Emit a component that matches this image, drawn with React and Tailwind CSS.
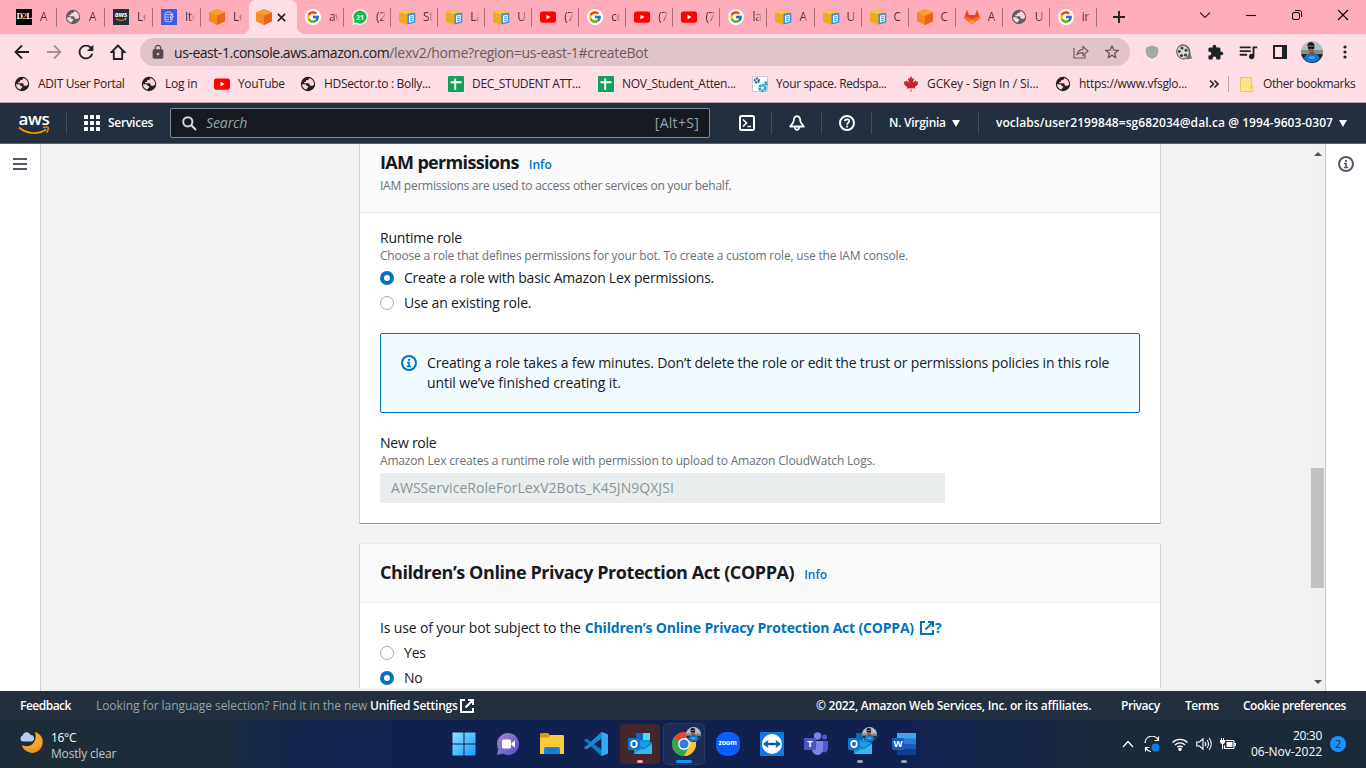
import React from 'react';
import { FcGoogle } from 'react-icons/fc';
import { FaCanadianMapleLeaf } from 'react-icons/fa';
import { MdExtension, MdQueueMusic, MdRefresh, MdLock, MdStarBorder } from 'react-icons/md';

/* ---------- favicons ---------- */

const Globe = ({ className }) => (
  <svg viewBox="0 0 16 16" className={`size-4 ${className}`}>
    <circle cx="8" cy="8" r="7.2" fill="currentColor" />
    <path
      d="M2 8.300h3.200c1 0 1.300.8 1.300 1.700h1.700v1.600c-.7.100-1.200.3-1.400 1.900C3.900 13.200 2 11 2 8.300zM9.300 2c-.2 1.600-1 2-2.500 2-.5 0-.8.300-.8.900s-.4 1-1.100 1h-.7v1.400h3.900c1.100 0 1.500.6 1.500 1.500 0 .8.400 1 1.100 1h1.600c.5 0 .8-.4.8-.9h1c.3-3.200-1.600-6.100-4.800-6.900z"
      className="fill-[#ffd3db]"
    />
  </svg>
);

const D2L = () => (
  <span className="flex size-4 items-center justify-center bg-black font-['Liberation_Serif',serif] text-[9px] font-bold tracking-[-0.600px] text-white">
    D<span className="text-[#f0a060]">2</span>L
  </span>
);

const AwsTile = () => (
  <svg viewBox="0 0 16 16" className="size-4">
    <rect width="16" height="16" fill="#232f3e" />
    <text x="8" y="8" fill="#fff" fontSize="6.500" fontWeight="700" textAnchor="middle" fontFamily="Open Sans">aws</text>
    <path d="M3 9.800c3 2 7 2 9.800.2M11.500 9.200l1.600.4-.4 1.500" fill="none" stroke="#f90" />
  </svg>
);

const Dynamo = () => (
  <svg viewBox="0 0 16 16" className="size-4">
    <rect width="16" height="16" fill="#3d5be0" />
    <g fill="none" stroke="#c6d2ff" strokeWidth=".9">
      <ellipse cx="7.500" cy="4.300" rx="3.500" ry="1.300" />
      <path d="M4 4.300v7.400c0 1.700 7 1.700 7 0V9.500M11 4.300v2M4 7c0 1.200 3 1.500 4.500 1.200M4 9.600c0 1 2.500 1.300 4 1.100M10.500 5.500 9 8.500h1.500L9.500 11l3-3.500H11l1-2z" />
    </g>
  </svg>
);

const OrangeBox = () => (
  <svg viewBox="0 0 16 16" className="size-4">
    <path d="M8 0 16 3.400v8.800L8 16 0 12.200V3.400z" fill="#f58a1f" />
    <path d="M8 0 16 3.400 8 6.800 0 3.400z" fill="#fa9e2e" />
    <path d="M8 6.800 16 3.400v8.800L8 16z" fill="#e8641b" />
  </svg>
);

const YellowBox = () => (
  <svg viewBox="0 0 17 16" className="h-4 w-[17px]">
    <path d="M7 .5 14 3v10l-7 2.500L0 13V3z" fill="#edab22" />
    <path d="M7 .5 14 3 7 5.200 0 3z" fill="#f8c64d" />
    <path d="m8.500 4.800 7.800-1v9.600l-7.800 2.100z" fill="#3c8fc9" />
    <path d="m10 6.400 4.800-.7v6.700L10 13.700z" fill="#e9f4fc" />
    <path d="m11 8 2.800-.4M11 9.900l2.800-.5M11 11.800l2.800-.6" stroke="#3c8fc9" strokeWidth=".9" />
  </svg>
);

const GoogleIcon = () => (
  <span className="flex size-4 items-center justify-center rounded-full bg-white">
    <FcGoogle className="size-[14px]" />
  </span>
);

const YouTubeIcon = () => (
  <svg viewBox="0 0 16 16" className="size-4">
    <rect y="2.400" width="16" height="11.400" rx="2.400" fill="#f00" />
    <path d="m6.500 5.800 4 2.300-4 2.300z" fill="#fff" />
  </svg>
);

const WhatsApp = () => (
  <svg viewBox="0 0 16 16" className="size-4">
    <path d="M8 .2a7.800 7.800 0 1 1-3.600 14.700L.3 15.800l1-4A7.800 7.800 0 0 1 8 .2z" fill="#fff" />
    <path d="M8 1.400a6.600 6.600 0 1 1-3.500 12.200l-2.700.7.8-2.700A6.600 6.600 0 0 1 8 1.400z" fill="#12b84c" />
    <text x="8" y="10.500" fill="#fff" fontSize="7" fontWeight="700" textAnchor="middle" fontFamily="Open Sans">21</text>
  </svg>
);

const Gitlab = () => (
  <svg viewBox="0 0 16 16" className="size-4">
    <path d="M3 .8 5 6h6l2-5.200L15.700 8c.2.8 0 1.500-.7 2L8 15.200 1 10c-.7-.5-.9-1.200-.7-2z" fill="#e24329" />
    <path d="M.8 7.300C3.500 7.500 6 9 8 10.700 10 9 12.500 7.500 15.200 7.300l.5 1.200c0 .7-.2 1.100-.7 1.500L8 15.200 1 10c-.6-.4-.8-1-.6-1.600z" fill="#fc6d26" />
    <path d="m8 10.700 3.300 2L8 15.200l-3.300-2.500z" fill="#fca326" />
  </svg>
);

const Sheets = () => (
  <svg viewBox="0 0 16 16" className="size-4">
    <rect width="16" height="16" rx="1" fill="#12a05c" />
    <path d="M2.500 6.200h11M7.200 2.500v11.500" stroke="#fff" strokeWidth="1.900" />
  </svg>
);

const Gears = () => (
  <svg viewBox="0 0 16 16" className="size-4">
    <rect x=".5" y=".5" width="15" height="15" fill="#fff" stroke="#c4cdd2" />
    <circle cx="4.800" cy="4.500" r="2" fill="none" stroke="#1d6f93" strokeWidth="2.200" strokeDasharray="2 .5" />
    <circle cx="10.500" cy="12" r="2.800" fill="none" stroke="#2fa3dc" strokeWidth="3" strokeDasharray="2.500 .6" />
    <path d="M12 5.500h3.500V10L13 9z" fill="#2fa3dc" />
  </svg>
);

/* ---------- browser chrome ---------- */

const tabs = [
  [D2L, 'A'], [() => <Globe className="text-[#5f5f63]" />, 'A'], [AwsTile, 'Le'], [Dynamo, 'Ite'], [OrangeBox, 'Le'],
];
const moreTabs = [
  [GoogleIcon, 'aw'], [WhatsApp, '(2'], [YellowBox, 'St'], [YellowBox, 'La'], [YellowBox, 'U'],
  [YouTubeIcon, '(7'], [GoogleIcon, 'co'], [YouTubeIcon, '(7'], [YouTubeIcon, '(7'], [GoogleIcon, 'la'],
  [YellowBox, 'A'], [YellowBox, 'U'], [YellowBox, 'C'], [OrangeBox, 'C'], [Gitlab, 'A'],
  [() => <Globe className="text-[#5f5f63]" />, 'U'], [GoogleIcon, 'ir'],
];

function Tab({ icon: Icon, label, width, line = true }) {
  return (
    <div className={`flex h-[19px] shrink-0 items-center pl-2 ${width} ${line ? 'border-r border-[#a8727c]' : ''}`}>
      <span className="flex w-6 shrink-0"><Icon /></span>
      <span className="w-[9px] overflow-hidden whitespace-nowrap bg-linear-to-r from-[#4a2f35] from-50% to-[#4a2f35]/20 bg-clip-text text-[12px] tracking-[-0.300px] text-transparent">{label}</span>
    </div>
  );
}

const Photo = ({ className }) => (
  <svg viewBox="0 0 22 22" className={className}>
    <defs><clipPath id="face"><circle cx="11" cy="11" r="11" /></clipPath></defs>
    <g clipPath="url(#face)">
      <rect width="22" height="22" fill="#a8c3d3" />
      <path d="M0 9h22v5H0z" fill="#9a8b78" />
      <path d="M0 13h22v9H0z" fill="#1b2c40" />
      <path d="M3 18c1-4 4-6 7-6.500 4-.5 8 2 8.500 6.500L14 21H7z" fill="#1576d6" />
      <path d="M8 10h5l-1 3.500H9.500z" fill="#7a4f3e" />
      <ellipse cx="10" cy="7" rx="3" ry="4" fill="#94644d" />
      <path d="M6.500 6C6 2.500 7.800 1.300 10 1.300s4 1.700 3.500 4.700l-1-1.500h-5z" fill="#1a1717" />
      <path d="M7 5.800h6.300v2h-2.600L10 7.200l-.8.600H7z" fill="#0c0c0e" />
      <path d="M8 15.500h5.500v2H8z" fill="#62b0f2" />
    </g>
  </svg>
);

function TabStrip() {
  return (
    <div className="flex h-[34px] bg-[#ffacbb] pl-2">
      <div className="flex items-center">
        {tabs.map(([icon, label], i) => (
          <Tab key={i} icon={icon} label={label} width={i === 0 ? 'w-[49px]' : 'w-12'} line={i < 4} />
        ))}
      </div>
      <div className="relative flex w-12 shrink-0 items-center rounded-t-[7px] bg-[#ffdfe5] pl-[7px]">
        <span className="absolute bottom-0 -left-2 size-2 bg-[radial-gradient(circle_at_0_0,#ffacbb_8px,#ffdfe5_8.500px)]" />
        <span className="absolute -right-2 bottom-0 size-2 bg-[radial-gradient(circle_at_100%_0,#ffacbb_8px,#ffdfe5_8.500px)]" />
        <OrangeBox />
        <svg viewBox="0 0 10 10" className="mr-[11px] ml-auto size-[9px] shrink-0" stroke="#202124" strokeWidth="1.800"><path d="m1 1 8 8M9 1 1 9" /></svg>
      </div>
      <div className="flex shrink-0 items-center">
        {moreTabs.map(([icon, label], i) => (
          <Tab key={i} icon={icon} label={label} width="w-[47.060px]" />
        ))}
      </div>
      <svg viewBox="0 0 12 12" className="mt-[11px] ml-4 size-3 shrink-0" stroke="#202124" strokeWidth="1.900"><path d="M6 0v12M0 6h12" /></svg>
      <div className="mt-2 ml-auto flex h-[13px] items-center pr-[17px] text-[#3a2529]">
        <svg viewBox="0 0 12 12" className="mr-[34px] size-3" fill="none" stroke="currentColor" strokeWidth="1.100"><path d="m1 3.500 5 5 5-5" /></svg>
        <svg viewBox="0 0 12 12" className="mr-[34px] size-3" fill="none" stroke="#000" strokeWidth="1.100"><path d="M1 6.500h10" /></svg>
        <svg viewBox="0 0 12 12" className="mr-[34px] size-3" fill="none" stroke="#000" strokeWidth="1"><rect x="1.500" y="3.500" width="7" height="7" rx="1.500" /><path d="M4 1.500h4.500a2 2 0 0 1 2 2V8" /></svg>
        <svg viewBox="0 0 12 12" className="size-3" fill="none" stroke="#000" strokeWidth="1.100"><path d="m1 1 10 10M11 1 1 11" /></svg>
      </div>
    </div>
  );
}

function Toolbar() {
  return (
    <div className="flex h-9 items-center bg-[#ffdfe5] pl-[14px] text-[#202124]">
      <svg viewBox="0 0 16 16" className="mr-4 size-4" fill="none" stroke="#202124" strokeWidth="1.800"><path d="M15 8H2M8 1.500 1.500 8 8 14.500" /></svg>
      <svg viewBox="0 0 16 16" className="mr-[13px] size-4" fill="none" stroke="#a58f94" strokeWidth="1.800"><path d="M1 8h13M8 1.500 14.500 8 8 14.500" /></svg>
      <MdRefresh className="mr-[13px] size-[22px]" />
      <svg viewBox="0 0 16 16" className="mr-[14px] size-4" fill="none" stroke="#202124" strokeWidth="1.900"><path d="M8 1.500 1.500 8h2.300v7h8.400V8h2.300z" /></svg>
      <div className="flex h-7 w-[990px] items-center rounded-full bg-[#e0c4c9] pl-[10px]">
        <MdLock className="mr-2 size-4 text-[#54494c]" />
        <span className="whitespace-nowrap text-[14px] tracking-[-0.460px] text-[#202124]">us-east-1.console.aws.amazon.com</span>
        <span className="whitespace-nowrap text-[14px] tracking-[-0.280px] text-[#6b5a5e]">/lexv2/home?region=us-east-1#createBot</span>
        <svg viewBox="0 0 16 16" className="mr-[14px] ml-auto size-4" fill="none" stroke="#6a5b5f" strokeWidth="1.200"><path d="M1 4v10h11v-3M4 10.500c.6-3 2.600-5 6-5.200V2.500l5 4.500-5 4.400V8.700c-2.600 0-4.500.500-6 1.800z" /></svg>
        <MdStarBorder className="mr-[9px] size-[18px] text-[#5f5155]" />
      </div>
      <svg viewBox="0 0 14 14" className="ml-[15px] size-[14px]"><path d="M7 .5 13.200 2.500V7c0 3.500-2.500 5.500-6.200 6.700C3.300 12.500.8 10.500.8 7V2.500z" fill="#a5a5a7" /></svg>
      <svg viewBox="0 0 16 16" className="ml-[17px] size-4">
        <path d="M5 .5c7-.5 9.500 3 9.500 9l1.500 5-5 1z" fill="#777" />
        <ellipse cx="7" cy="8" rx="6.200" ry="7" fill="#dadada" stroke="#555" transform="rotate(-15 7 8)" />
        <g fill="#3f3f3f"><circle cx="6" cy="4" r="1.600" /><circle cx="3.300" cy="7.500" r="1.400" /><circle cx="5.500" cy="11.500" r="1.600" /><circle cx="9.500" cy="11" r="1.600" /><circle cx="10" cy="6.300" r="1.500" /></g>
      </svg>
      <MdExtension className="ml-[15px] size-[17px]" />
      <MdQueueMusic className="ml-[13px] size-[22px]" />
      <svg viewBox="0 0 14 14" className="ml-[14px] size-[14px]"><path d="M1 1h12v12H1z" fill="none" stroke="#202124" strokeWidth="2" /><path d="M9 1h4v12H9z" fill="#202124" /></svg>
      <Photo className="ml-[14px] size-[22px]" />
      <svg viewBox="0 0 4 14" className="ml-5 h-[14px] w-1" fill="#202124"><circle cx="2" cy="2" r="1.600" /><circle cx="2" cy="7" r="1.600" /><circle cx="2" cy="12" r="1.600" /></svg>
    </div>
  );
}

const DarkGlobe = () => <Globe className="text-[#202124]" />;
const Maple = () => <FaCanadianMapleLeaf className="size-4 text-[#c4262e]" />;
const bookmarks = [
  [DarkGlobe, 'ADIT User Portal', 'w-[127px] tracking-[-0.340px]'],
  [DarkGlobe, 'Log in', 'w-[73px] tracking-[-0.200px]'],
  [YouTubeIcon, 'YouTube', 'w-[86px] tracking-[-0.400px]'],
  [DarkGlobe, 'HDSector.to : Bolly...', 'w-[148px] tracking-[-0.320px]'],
  [Sheets, 'DEC_STUDENT ATT...', 'w-[150px] tracking-[-0.330px]'],
  [Sheets, 'NOV_Student_Atten...', 'w-[154px] tracking-[-0.300px]'],
  [Gears, 'Your space. Redspa...', 'w-[151px] tracking-[-0.380px]'],
  [Maple, 'GCKey - Sign In / Si...', 'w-[152px] tracking-[-0.080px]'],
  [DarkGlobe, 'https://www.vfsglo...', 'w-[154px] tracking-[-0.290px]'],
];

function BookmarksBar() {
  return (
    <div className="flex h-[33px] items-center border-b border-[#b9a5ab] bg-[#ffdfe5] pb-[4px] pl-[14px] text-[12px] text-[#2b2326]">
      {bookmarks.map(([Icon, label, cls]) => (
        <div key={label} className={`flex shrink-0 items-center whitespace-nowrap ${cls}`}>
          <span className="w-6 shrink-0"><Icon /></span>
          {label}
        </div>
      ))}
      <svg viewBox="0 0 10 10" className="size-[10px] shrink-0" fill="none" stroke="#202124" strokeWidth="1.600"><path d="m1 1.500 3.500 3.500L1 8.500M5.500 1.500 9 5 5.500 8.500" /></svg>
      <span className="ml-[9px] h-4 w-px bg-[#bfa3a9]" />
      <svg viewBox="0 0 14 15" className="mr-[9px] ml-[11px] h-[15px] w-[14px]"><path d="M.5.500h11v8.500h1.500v5.500H.5z" fill="#ffe48f" stroke="#ecc94f" /><path d="M10.500 9v4" stroke="#ecc94f" /></svg>
      <span className="whitespace-nowrap tracking-[-0.420px]">Other bookmarks</span>
    </div>
  );
}

/* ---------- AWS console ---------- */

const Divider = () => <span className="h-[22px] w-px shrink-0 bg-[#414d5c]" />;
const Caret = () => <svg viewBox="0 0 8 7" className="h-[7px] w-2 shrink-0" fill="#fff"><path d="M0 0h8L4 7z" /></svg>;

function ConsoleHeader() {
  return (
    <header className="flex h-[41px] items-center border-b border-[#55606d] bg-[#232f3e] text-[12px] font-semibold whitespace-nowrap text-white">
      <div className="ml-[18px] flex h-[26px] w-8 flex-col items-center pt-[3px]">
        <span className="text-[17px] leading-[11px] font-semibold tracking-[-0.400px]">aws</span>
        <svg viewBox="0 0 32 9" className="mt-[2px] h-[9px] w-8 shrink-0" fill="none" stroke="#f90" strokeWidth="1.700"><path d="M1 1.500C9 8.500 21 8.500 28 3.500" /><path d="M25 1.500c2-.7 4-.6 5.200 0 .3 1.500-.4 3.500-1.700 5.200" strokeWidth="1.300" /></svg>
      </div>
      <span className="w-4" />
      <Divider />
      <svg viewBox="0 0 16 16" className="ml-[17px] size-4" fill="#fff">
        {[0, 6, 12].map((y) => [0, 6, 12].map((x) => <rect key={`${x}-${y}`} x={x} y={y} width="4" height="4" rx=".5" />))}
      </svg>
      <span className="ml-2 w-[62px] tracking-[-0.250px]">Services</span>
      <div className="flex h-[30px] w-[540px] items-center rounded-[2px] border border-[#7f8a94] bg-[#16191f] pr-[10px] pl-[11px] text-[14px] font-normal text-[#95a5a6]">
        <svg viewBox="0 0 15 15" className="size-[15px]" fill="none" stroke="#d5dbdb" strokeWidth="2"><circle cx="5.800" cy="5.800" r="4.600" /><path d="m9.300 9.300 4.700 4.700" /></svg>
        <span className="ml-[9px] pb-px tracking-[-0.100px] italic">Search</span>
        <span className="ml-auto pb-px tracking-[0.280px]">[Alt+S]</span>
      </div>
      <svg viewBox="0 0 16 16" className="ml-[29px] size-4" fill="none" stroke="#fff" strokeWidth="2"><rect x="1" y="1" width="14" height="14" rx="1.500" /><path d="m4 4.500 3.500 3.500L4 11.500M8.500 11.500H12" strokeWidth="1.600" /></svg>
      <span className="w-4" /><Divider />
      <svg viewBox="0 0 16 16" className="ml-[17px] size-4" fill="none" stroke="#fff" strokeWidth="1.800" strokeLinejoin="round"><path d="M8 1.200c-2.200.3-3.200 2-3.200 4.300C4.500 8 2.500 9.500 1.200 11.500h13.600C13.500 9.500 11.500 8 11.200 5.500 11.200 3.200 10.200 1.500 8 1.200zM5.800 12c.3 3.800 4.100 3.800 4.400 0" /></svg>
      <span className="w-4" /><Divider />
      <svg viewBox="0 0 16 16" className="ml-[17px] size-4" fill="none" stroke="#fff" strokeWidth="2"><circle cx="8" cy="8" r="7" /><path d="M5.800 6.300c.2-2.700 4.500-2.500 4.500 0C10.300 7.800 8 7.800 8 9.700M8 10.800v1.700" strokeWidth="1.700" /></svg>
      <span className="w-4" /><Divider />
      <span className="ml-[17px] w-[63px] tracking-[-0.270px]">N. Virginia</span>
      <Caret />
      <span className="w-[18px]" /><Divider />
      <span className="ml-[17px] w-[343px] tracking-[0.060px]">voclabs/user2199848=sg682034@dal.ca @ 1994-9603-0307</span>
      <Caret />
    </header>
  );
}

const InfoIcon = ({ className }) => (
  <svg viewBox="0 0 16 16" className={`size-4 shrink-0 ${className}`} fill="none" stroke="currentColor" strokeWidth="2">
    <circle cx="8" cy="8" r="7" />
    <path d="M6 7.500h2v4M5.800 11.500h4.400M7 4.900h2" strokeWidth="1.700" />
  </svg>
);

const External = ({ className = '' }) => (
  <svg viewBox="0 0 14 14" className={`size-[14px] ${className}`} fill="none" stroke="currentColor" strokeWidth="2">
    <path d="M5 1H1v12h12V9M8 1h5v5M13 1 5.500 8.500" />
  </svg>
);

function Radio({ checked, children, tracking }) {
  return (
    <label className="flex h-5 items-center gap-[10px]">
      <span className={`box-border size-[14px] shrink-0 rounded-full bg-white ${checked ? 'border-[4.500px] border-[#0073bb]' : 'border border-[#a3adad]'}`} />
      <span className={`leading-5 ${tracking}`}>{children}</span>
    </label>
  );
}

function Console() {
  return (
    <div className="flex h-[547px] text-[14px] whitespace-nowrap text-[#16191f]">
      <nav className="w-[41px] shrink-0 border-r border-[#cdd2d4] bg-white pt-[14px] pl-[13px]">
        <svg viewBox="0 0 14 12" className="h-3 w-[14px]" stroke="#545b64" strokeWidth="1.900"><path d="M0 1h14M0 6h14M0 11h14" /></svg>
      </nav>
      <main className="w-[1269px] shrink-0 overflow-hidden bg-[#f2f3f3] pl-[318px]">
        <section className="w-[802px] border-x border-b border-x-[#cdd3d6] border-b-[#8b95a1] bg-white">
          <div className="h-[69px] border-b border-[#eaeded] bg-[#fafafa] px-5 pt-[6px]">
            <div className="flex h-6 items-baseline gap-[10px]">
              <h2 className="text-[18px] leading-6 font-bold tracking-[-0.660px]">IAM permissions</h2>
              <a className="text-[12px] font-semibold text-[#0073bb]">Info</a>
            </div>
            <p className="mt-1 text-[12px] leading-4 tracking-[-0.250px] text-[#687078]">IAM permissions are used to access other services on your behalf.</p>
          </div>
          <div className="px-5 pt-[15px] pb-5">
            <div className="leading-5 tracking-[-0.200px]">Runtime role</div>
            <div className="text-[12px] leading-4 tracking-[-0.190px] text-[#687078]">Choose a role that defines permissions for your bot. To create a custom role, use the IAM console.</div>
            <div className="mt-1 flex flex-col gap-[5px]">
              <Radio checked tracking="tracking-[-0.240px]">Create a role with basic Amazon Lex permissions.</Radio>
              <Radio tracking="tracking-[-0.190px]">Use an existing role.</Radio>
            </div>
            <div className="mt-5 flex h-20 gap-[10px] rounded-[2px] border border-[#0073bb] bg-[#f1faff] pt-[19px] pl-5">
              <InfoIcon className="mt-[2px] text-[#0073bb]" />
              <div className="leading-5">
                <div className="tracking-[-0.165px]">Creating a role takes a few minutes. Don’t delete the role or edit the trust or permissions policies in this role</div>
                <div className="tracking-[-0.090px]">until we’ve finished creating it.</div>
              </div>
            </div>
            <div className="mt-5 leading-5 tracking-[-0.250px]">New role</div>
            <div className="text-[12px] leading-4 tracking-[-0.170px] text-[#687078]">Amazon Lex creates a runtime role with permission to upload to Amazon CloudWatch Logs.</div>
            <div className="mt-1 flex h-[30px] w-[565px] items-center rounded-[2px] bg-[#eaeded] px-[11px] pb-px tracking-[0.050px] text-[#879596]">AWSServiceRoleForLexV2Bots_K45JN9QXJSI</div>
          </div>
        </section>
        <section className="mt-[19px] w-[802px] border-x border-t border-x-[#cdd3d6] border-t-[#eaeded] bg-white">
          <div className="flex h-[59px] items-baseline gap-[10px] border-b border-[#eaeded] bg-[#fafafa] px-5 pt-4">
            <h2 className="text-[18px] leading-6 font-bold tracking-[-0.430px]">Children’s Online Privacy Protection Act (COPPA)</h2>
            <a className="text-[12px] font-semibold text-[#0073bb]">Info</a>
          </div>
          <div className="px-5 pt-[15px]">
            <div className="flex h-5 items-center leading-5">
              <span className="tracking-[-0.150px]">Is use of your bot subject to the</span>
              <a className="ml-1 flex items-center font-bold tracking-[-0.190px] text-[#0073bb]">
                Children’s Online Privacy Protection Act (COPPA)
                <External className="mr-[1px] ml-[6px]" />?
              </a>
            </div>
            <div className="mt-[5px] flex flex-col gap-[5px]">
              <Radio tracking="tracking-[-0.200px]">Yes</Radio>
              <Radio checked tracking="tracking-[-0.200px]">No</Radio>
            </div>
          </div>
        </section>
      </main>
      <div className="flex w-[16px] shrink-0 flex-col items-center border-r border-[#c3c7c8] bg-[#f1f1f1]">
        <svg viewBox="0 0 8 4" className="mt-2 h-1 w-2" fill="#505050"><path d="M4 0l4 4H0z" /></svg>
        <div className="mt-[312px] h-[120px] w-[13px] bg-[#c1c1c1]" />
        <svg viewBox="0 0 8 4" className="mt-auto mb-[7px] h-1 w-2" fill="#505050"><path d="M0 0h8L4 4z" /></svg>
      </div>
      <aside className="flex flex-1 justify-center bg-white pt-3"><InfoIcon className="text-[#545b64]" /></aside>
    </div>
  );
}

function Footer() {
  return (
    <footer className="flex h-[29px] items-center bg-[#232f3e] px-5 text-[12px] font-semibold whitespace-nowrap text-white">
      <span className="w-[76px] tracking-[-0.500px]">Feedback</span>
      <span className="w-[274px] font-normal tracking-[-0.060px] text-[#95a5a6]">Looking for language selection? Find it in the new</span>
      <span className="w-[90px] tracking-[-0.250px]">Unified Settings</span>
      <External />
      <span className="ml-auto w-[305px] tracking-[-0.270px]">© 2022, Amazon Web Services, Inc. or its affiliates.</span>
      <span className="w-[64px] tracking-[-0.430px]">Privacy</span>
      <span className="w-[58px] tracking-[-0.500px]">Terms</span>
      <span className="w-[103px] tracking-[-0.500px]">Cookie preferences</span>
    </footer>
  );
}

/* ---------- Windows taskbar ---------- */

const WindowsLogo = () => (
  <svg viewBox="0 0 24 24" className="size-6">
    <defs><linearGradient id="win" x1="0" y1="0" x2="1" y2="1"><stop stopColor="#8be2ff" /><stop offset="1" stopColor="#1b9bff" /></linearGradient></defs>
    <path d="M.5.500h11v11H.5zM12.500.5h11v11h-11zM.5 12.500h11v11H.5zM12.500 12.500h11v11h-11z" fill="url(#win)" />
  </svg>
);
const Chat = () => (
  <svg viewBox="0 0 24 24" className="size-6">
    <defs><linearGradient id="chat" x1="0" y1="0" x2="1" y2="1"><stop stopColor="#a985c9" /><stop offset="1" stopColor="#4c52d4" /></linearGradient></defs>
    <path d="M12 1a11 11 0 1 1-5 20.800L1 23l1.200-6A11 11 0 0 1 12 1z" fill="url(#chat)" />
    <rect x="6" y="7.500" width="9" height="9" rx="1.500" fill="#fff" /><path d="m15.500 11 3.500-2.500v7L15.500 13z" fill="#fff" />
  </svg>
);
const Explorer = () => (
  <svg viewBox="0 0 24 24" className="size-6">
    <path d="M0 2.500C0 1.500.5 1 1.500 1H8l2.500 2.500-2 2.500H0z" fill="#d9970f" />
    <path d="M0 5.500h8L10.500 3H22.500c1 0 1.500.5 1.500 1.500V22H0z" fill="#fdca3a" />
    <path d="M4 22v-5c0-1.500 1-2 2-2h12c1 0 2 .5 2 2v5z" fill="#1584d8" /><path d="M7.500 18h9" stroke="#0b5ea8" />
  </svg>
);
const VsCode = () => (
  <svg viewBox="0 0 24 24" className="size-6">
    <path d="M17.500 0 24 2.500v19L17.500 24 3 10.800 0 8.500l1.500-1.700 2 .4 14 10.300z" fill="#0b79c4" />
    <path d="m17.500 0-14 13L0 15.500l1.500 1.800 2-.5L17.500 6.500z" fill="#1a8ad4" />
    <path d="M17.500 0 24 2.500v19L17.500 24z" fill="#35aaf2" />
  </svg>
);
const Outlook = () => (
  <svg viewBox="0 0 24 24" className="size-6">
    <rect x="8" y="1" width="14" height="14" fill="#1490df" /><path d="M15 1h7v7h-7z" fill="#50d9ff" /><path d="M8 1h7v7H8z" fill="#0a67b5" />
    <path d="M6 10.500h18V22H6z" fill="#1a9ce6" /><path d="M24 11 6 22h18z" fill="#37b5f2" /><path d="m7 11 8.500 6L24 11" fill="none" stroke="#0b62aa" />
    <rect y="6" width="12" height="12" rx="1" fill="#0f74ce" />
    <ellipse cx="6" cy="12" rx="2.800" ry="3.200" fill="none" stroke="#fff" strokeWidth="1.700" />
  </svg>
);
const Chrome = () => (
  <svg viewBox="0 0 24 24" className="size-6">
    <circle cx="12" cy="12" r="12" fill="#ea4335" />
    <path d="M1.600 6A12 12 0 0 0 12 24l5.200-9z" fill="#2da94f" />
    <path d="M12 24A12 12 0 0 0 22.400 6H12l5.200 9z" fill="#fcc934" />
    <path d="M1.600 6 6.800 15 12 12z" fill="#2da94f" />
    <circle cx="12" cy="12" r="5.900" fill="#fff" /><circle cx="12" cy="12" r="4.600" fill="#2f7bea" />
  </svg>
);
const Zoom = () => <span className="flex size-6 items-center justify-center rounded-[10px] bg-[#0b5cff] pb-px text-[7px] font-bold tracking-[-0.200px] text-white">zoom</span>;
const TeamViewer = () => (
  <svg viewBox="0 0 24 24" className="size-6">
    <rect width="24" height="24" rx="1" fill="#0f7bdc" /><circle cx="12" cy="12" r="10" fill="#fff" />
    <path d="m3 12 5.500-4.200-.8 3h8.600l-.8-3L21 12l-5.500 4.200.8-3H7.700l.8 3z" fill="#0c5fae" />
  </svg>
);
const Teams = () => (
  <svg viewBox="0 0 24 24" className="size-6">
    <circle cx="13.500" cy="4" r="3.700" fill="#7b83eb" /><circle cx="20.500" cy="5" r="2.600" fill="#5059c9" />
    <path d="M16 9h8v7c0 3-2 4.500-4 4.500s-4-1.500-4-4z" fill="#5059c9" /><path d="M8 9h11v7.500c0 4-2.500 6.500-5.500 6.500S8 20.500 8 17z" fill="#7b83eb" />
    <rect y="6" width="12" height="12" rx="1" fill="#4b53bc" />
    <text x="6" y="15.300" fill="#fff" fontSize="9.500" fontWeight="700" textAnchor="middle" fontFamily="Open Sans">T</text>
  </svg>
);
const Word = () => (
  <svg viewBox="0 0 24 24" className="size-6">
    <path d="M6 1h17c.6 0 1 .4 1 1v5H5V2c0-.6.400-1 1-1z" fill="#41a5ee" /><path d="M5 6.500h19V12H5z" fill="#2b7cd3" /><path d="M5 12h19v5.500H5z" fill="#185abd" /><path d="M5 17.500h19V22c0 .6-.4 1-1 1H6c-.6 0-1-.4-1-1z" fill="#103f91" />
    <rect y="6" width="12" height="12" rx="1" fill="#185abd" />
    <text x="6" y="15.300" fill="#fff" fontSize="9.500" fontWeight="700" textAnchor="middle" fontFamily="Open Sans">W</text>
  </svg>
);

const apps = [
  { Icon: WindowsLogo }, { Icon: Chat }, { Icon: Explorer }, { Icon: VsCode },
  { Icon: Outlook, tile: 'bg-[#45272b]', bar: 'w-[6px] bg-[#ff99a4]' },
  { Icon: Chrome, tile: 'bg-[#1d2c57] outline outline-[#2d3b63]', bar: 'w-4 bg-[#1592ff]', photo: true },
  { Icon: Zoom }, { Icon: TeamViewer }, { Icon: Teams },
  { Icon: Outlook, bar: 'w-[6px] bg-[#9aa1b1]', photo: true },
  { Icon: Word, bar: 'w-[6px] bg-[#9aa1b1]' },
];

function Taskbar() {
  return (
    <div className="flex h-12 bg-[linear-gradient(90deg,#1e2c37_0,#1e2c37_220px,#15284a_270px,#102150_400px,#11204f_900px,#172743_1040px,#1b2a39_1110px)] text-[12px] whitespace-nowrap text-white">
      <div className="flex w-[443px] shrink-0 pt-[10px] pl-5">
        <svg viewBox="0 0 24 24" className="mt-[1px] size-6">
          <path d="M15 1c6 2 8.500 6.500 7.500 12-1.200 6-6.500 9.500-12 8.500C6 20.700 3 18 2 14c4 2 8 1.500 10.500-1C15.500 10 16.500 5.500 15 1z" fill="#f6a62b" />
          <path d="M2 14c4 5 12 6 20.500-1-1.200 6-6.500 9.500-12 8.500C6 20.700 3 18 2 14z" fill="#ee8a1d" opacity=".6" />
          <path d="M3 10.500A3 3 0 0 1 2.800 4.600 4 4 0 0 1 10.500 4a3.300 3.300 0 0 1 1 6.500z" fill="#b9cdf3" />
        </svg>
        <div className="ml-[7px] leading-4">
          <div className="tracking-[-0.300px]">16°C</div>
          <div className="tracking-[-0.170px] text-[#c2c8cc]">Mostly clear</div>
        </div>
      </div>
      {apps.map(({ Icon, tile = '', bar, photo }, i) => (
        <div key={i} className="flex w-11 shrink-0 justify-center py-1">
          <div className={`relative mr-[3px] flex size-10 items-center justify-center rounded-[4px] ${tile}`}>
            <Icon />
            {photo && <Photo className="absolute top-[3px] right-[3px] size-[15px]" />}
            {bar && <span className={`absolute bottom-[1px] h-[3px] rounded-full ${bar}`} />}
          </div>
        </div>
      ))}
      <div className="ml-auto flex items-center pr-5">
        <svg viewBox="0 0 12 8" className="mr-[10px] h-2 w-3" fill="none" stroke="#fff" strokeWidth="1.200"><path d="m1 7 5-5.500L11 7" /></svg>
        <svg viewBox="0 0 16 16" className="mr-3 size-4" fill="none" stroke="#fff" strokeWidth="1.200"><path d="M1 7a7 7 0 0 1 13.500-2.500M14.500.5v4h-4M7 15.500A7 7 0 0 1 1.800 12M1.500 15.500v-4h4" /><circle cx="11.500" cy="11.500" r="4" fill="#0f7ee0" stroke="none" /></svg>
        <svg viewBox="0 0 16 16" className="mr-2 size-4" fill="none" stroke="#fff" strokeWidth="1.300"><path d="M.5 6.500a10.600 10.600 0 0 1 15 0M3 9a7.100 7.100 0 0 1 10 0M5.300 11.300a3.800 3.800 0 0 1 5.400 0" /><circle cx="8" cy="13.200" r="1.100" fill="#fff" /></svg>
        <svg viewBox="0 0 16 16" className="mr-2 size-4" fill="none" stroke="#fff" strokeWidth="1.100"><path d="M.8 6v4h2.700L7 13.200V2.800L3.500 6zM9 6c1 1.200 1 2.800 0 4M11 4c2 2.200 2 5.800 0 8M13 2c3 3.500 3 8.500 0 12" /></svg>
        <svg viewBox="0 0 16 16" className="size-4"><path d="M5.500 4.500H13a1 1 0 0 1 1 1v6a1 1 0 0 1-1 1H4.500V9.500" fill="none" stroke="#fff" strokeWidth="1.200" /><path d="M6.500 6h6v5h-6zM14.500 7H16v3h-1.500zM0 4h5v2.500L3.500 8h-2L0 6.500zM1 2h1v2H1zM3 2h1v2H3zM2 8h1v5H2z" fill="#fff" /></svg>
        <div className="ml-[15px] w-[71px] text-right leading-4">
          <div className="tracking-[-0.300px]">20:30</div>
          <div>06-Nov-2022</div>
        </div>
        <span className="ml-2 flex size-4 items-center justify-center rounded-full bg-[#1592ff] text-[10px] text-[#10202c]">2</span>
      </div>
    </div>
  );
}

export default function App() {
  return (
    <div className="h-[768px] w-[1366px] overflow-hidden font-['Open_Sans','Noto_Sans',sans-serif]">
      <TabStrip />
      <Toolbar />
      <BookmarksBar />
      <ConsoleHeader />
      <Console />
      <Footer />
      <Taskbar />
    </div>
  );
}
